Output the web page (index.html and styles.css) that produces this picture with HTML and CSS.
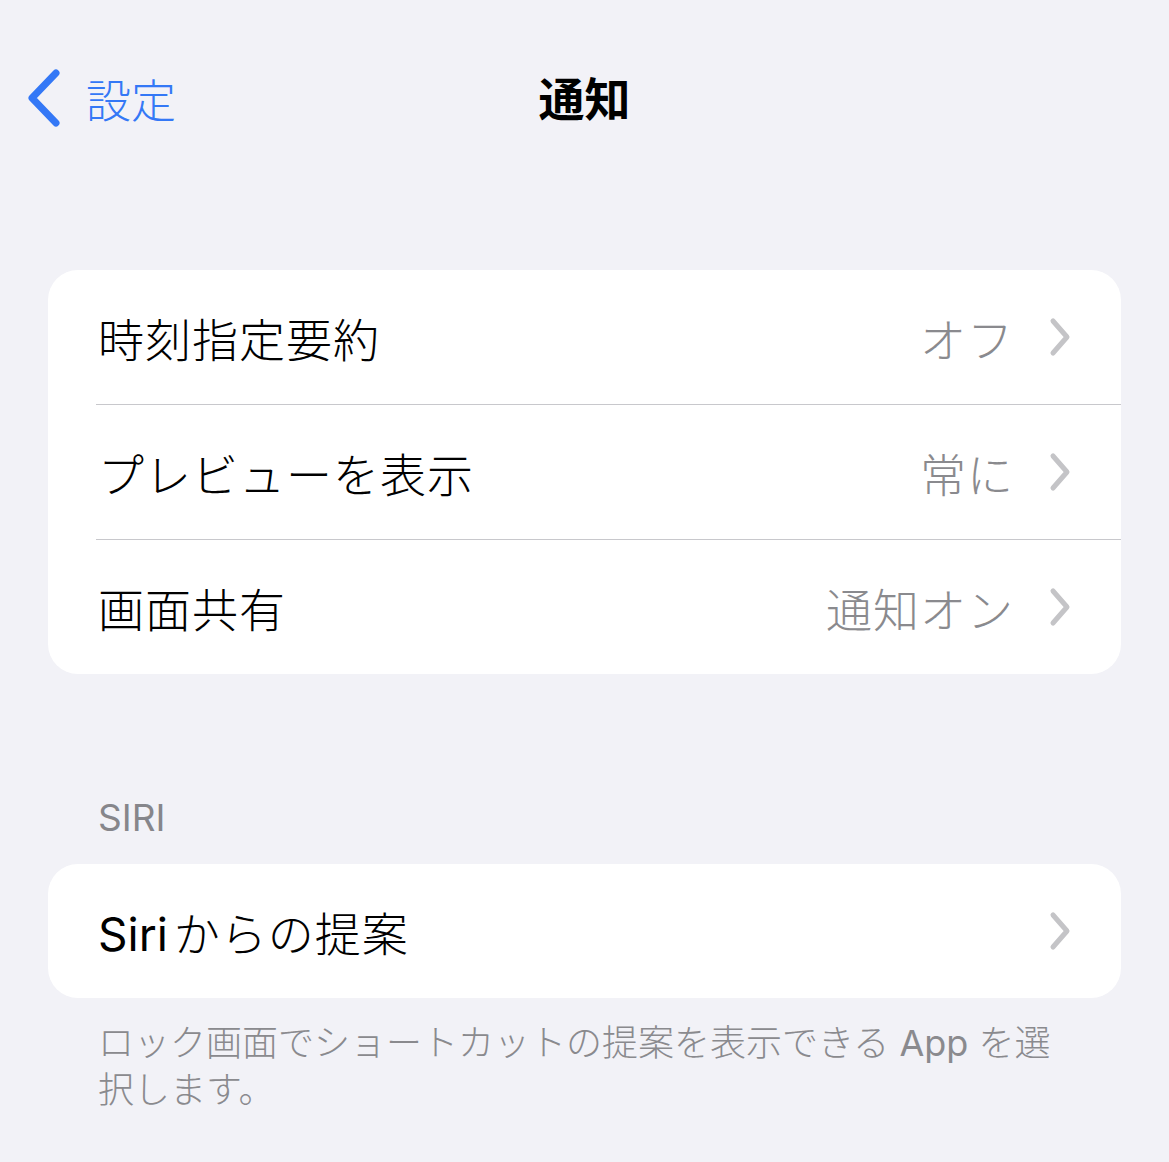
FILE: index.html
```html
<!DOCTYPE html>
<html lang="ja">
<head>
  <meta charset="UTF-8" />
  <meta name="viewport" content="width=device-width, initial-scale=1" />
  <title>通知</title>
  <link rel="stylesheet" href="styles.css">
</head>
<body>
  <header class="navbar">
    <a class="back" href="#">
      <svg class="back-icon" width="40" height="60" viewBox="0 0 40 60">
        <path d="M32 4 L8 29 L32 54" fill="none" stroke="currentColor" stroke-width="7" stroke-linecap="round" stroke-linejoin="round" />
      </svg>
      <span>設定</span>
    </a>
    <h1>通知</h1>
  </header>

  <main>
    <section class="group">
      <div class="card">
        <div class="row">
          <span class="label">時刻指定要約</span>
          <span class="value">オフ</span>
          <svg class="chevron" width="24" height="40" viewBox="0 0 24 40">
            <path d="M5 4 L19 20 L5 36" fill="none" stroke="currentColor" stroke-width="5" stroke-linecap="round" stroke-linejoin="round" />
          </svg>
        </div>
        <div class="row">
          <span class="label">プレビューを表示</span>
          <span class="value">常に</span>
          <svg class="chevron" width="24" height="40" viewBox="0 0 24 40">
            <path d="M5 4 L19 20 L5 36" fill="none" stroke="currentColor" stroke-width="5" stroke-linecap="round" stroke-linejoin="round" />
          </svg>
        </div>
        <div class="row">
          <span class="label">画面共有</span>
          <span class="value">通知オン</span>
          <svg class="chevron" width="24" height="40" viewBox="0 0 24 40">
            <path d="M5 4 L19 20 L5 36" fill="none" stroke="currentColor" stroke-width="5" stroke-linecap="round" stroke-linejoin="round" />
          </svg>
        </div>
      </div>
    </section>

    <section class="group">
      <h2 class="group-title">SIRI</h2>
      <div class="card">
        <div class="row">
          <span class="label mixed"><span class="latin">Siri</span> からの提案</span>
          <span class="value"></span>
          <svg class="chevron" width="24" height="40" viewBox="0 0 24 40">
            <path d="M5 4 L19 20 L5 36" fill="none" stroke="currentColor" stroke-width="5" stroke-linecap="round" stroke-linejoin="round" />
          </svg>
        </div>
      </div>
      <p class="group-footer">ロック画面でショートカットの提案を表示できる <span class="latin">App</span> を選択します。</p>
    </section>
  </main>
</body>
</html>
```

FILE: styles.css
```css
body {
  margin: 0;
  font-family: Inter, "Noto Sans CJK JP", sans-serif;
  background-color: #f2f2f7;
  color: #000;
}

.navbar {
  position: relative;
  height: 192px;
  display: flex;
  align-items: center;
  justify-content: center;
}

.navbar h1 {
  margin: 0;
  font-size: 46px;
  font-weight: 700;
}

.back {
  position: absolute;
  left: 24px;
  top: 66px;
  display: flex;
  align-items: center;
  gap: 22px;
  color: #3478f6;
  text-decoration: none;
  font-size: 45px;
  font-weight: 300;
}

.back-icon {
  display: block;
}

main {
  padding: 78px 48px 0;
}

.card {
  background-color: #fff;
  border-radius: 30px;
  overflow: hidden;
}

.row {
  height: 134px;
  display: flex;
  align-items: center;
  padding: 0 49px 0 50px;
}

.row + .row {
  border-top: 1px solid #c8c8cc;
  margin-left: 48px;
  padding-left: 2px;
}

.label {
  flex: 1;
  font-size: 46px;
  font-weight: 300;
  letter-spacing: 1px;
}

.label.mixed {
  word-spacing: -8px;
}

.latin {
  font-weight: 400;
  letter-spacing: 0;
}

.value {
  font-size: 46px;
  font-weight: 300;
  letter-spacing: 1px;
  color: #8a8a8e;
  margin-right: 34px;
}

.chevron {
  display: block;
  color: #c4c4c7;
}

.group + .group {
  margin-top: 118px;
}

.group-title {
  margin: 0 0 20px 50px;
  font-size: 37px;
  font-weight: 400;
  line-height: 52px;
  color: #86868b;
}

.group-footer {
  margin: 22px 50px 0;
  font-size: 36px;
  font-weight: 300;
  line-height: 47px;
  color: #8a8a8e;
}
```
